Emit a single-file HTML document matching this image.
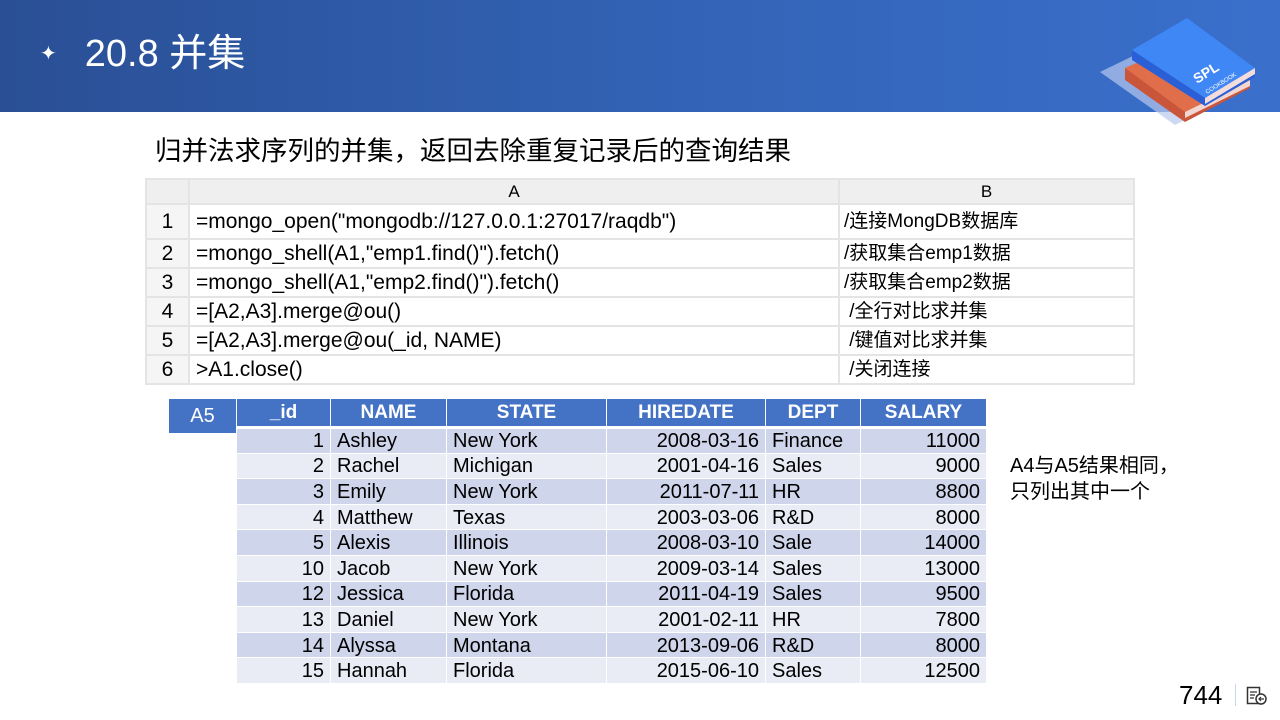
<!DOCTYPE html>
<html><head><meta charset="utf-8"><style>
*{margin:0;padding:0;box-sizing:border-box}
body{width:1280px;height:720px;position:relative;background:#fff;overflow:hidden;font-family:"Liberation Sans","Noto Sans CJK SC",sans-serif;color:#000}
.hdr{position:absolute;left:0;top:0;width:1280px;height:112px;background:linear-gradient(90deg,#2a4f95 0%,#3262b4 50%,#3a70cc 100%)}
.title{position:absolute;left:40px;top:29px;color:#fff;font-size:38px;line-height:50px}
.title .st{font-size:20px;position:relative;top:-6px;margin-right:28px}
.sub{position:absolute;left:155px;top:134px;font-size:26.5px;line-height:34px}
.ab{position:absolute}
table{border-collapse:collapse;position:absolute}
.code{left:145px;top:178px;width:988px;table-layout:fixed}
.code td{border:2px solid #e4e4e4;height:29px;font-size:21px;line-height:22px;padding:0 0 0 6px;white-space:nowrap;overflow:hidden}
.code tr.h td{background:#efefef;font-size:17px;text-align:center;height:25px;padding:0}
.code td.n{text-align:center;padding:0;background:#f5f5f5}
.code td.b{font-size:19px;padding-left:4px}
.data{left:236px;top:398px;width:751px}
.data th{background:#4472c4;color:#fff;font-size:19px;height:29px;border:1px solid #fff;border-bottom:3px solid #fff}
.data td{font-size:20px;height:25.6px;border:1px solid #fff;padding:1px 6px 0;line-height:22px}
.data tr:nth-child(even) td{background:#cfd5ea}
.data tr:nth-child(odd) td{background:#e9ebf5}
.r{text-align:right}
</style></head><body>
<div class="hdr"></div>
<div class="title"><span class="st">✦</span>20.8 并集</div>
<svg class="ab" style="left:1095px;top:10px" width="170" height="115" viewBox="0 0 170 115">
<polygon points="5,62 40,45 110,100 80,115" fill="#b8c8ee" opacity="0.7"/>
<polygon points="30,58 95,30 155,70 155,78 90,112 30,70" fill="#c9553a"/>
<polygon points="30,58 95,30 155,70 90,102" fill="#e06e4a"/>
<polygon points="90,102 155,70 155,76 90,108" fill="#f3d6d0"/>
<polygon points="37,40 92,8 160,58 160,67 110,96 37,50" fill="#2b5fd6"/>
<polygon points="37,40 92,8 160,58 110,88" fill="#3f87f5"/>
<polygon points="110,88 160,58 160,64 110,94" fill="#f2dcdc"/>
<text x="102" y="74" fill="#fff" font-size="14" font-weight="bold" transform="rotate(-32 102 74)" font-family="Liberation Sans">SPL</text>
<text x="112" y="84" fill="#fff" font-size="6" transform="rotate(-32 112 84)" font-family="Liberation Sans">COOKBOOK</text>
</svg>
<div class="sub">归并法求序列的并集，返回去除重复记录后的查询结果</div>
<table class="code">
<colgroup><col style="width:43px"><col style="width:650px"><col style="width:295px"></colgroup>
<tr class="h"><td class="n"></td><td>A</td><td class="b" style="text-align:center;padding:0;font-size:17px">B</td></tr>
<tr><td class="n" style="height:35px">1</td><td>=mongo_open("mongodb://127.0.0.1:27017/raqdb")</td><td class="b">/连接MongDB数据库</td></tr>
<tr><td class="n">2</td><td>=mongo_shell(A1,"emp1.find()").fetch()</td><td class="b">/获取集合emp1数据</td></tr>
<tr><td class="n">3</td><td>=mongo_shell(A1,"emp2.find()").fetch()</td><td class="b">/获取集合emp2数据</td></tr>
<tr><td class="n">4</td><td>=[A2,A3].merge@ou()</td><td class="b">&nbsp;/全行对比求并集</td></tr>
<tr><td class="n">5</td><td>=[A2,A3].merge@ou(_id, NAME)</td><td class="b">&nbsp;/键值对比求并集</td></tr>
<tr><td class="n">6</td><td>&gt;A1.close()</td><td class="b">&nbsp;/关闭连接</td></tr>
</table>
<div class="ab" style="left:169px;top:399px;width:67px;height:34px;background:#4472c4;color:#fff;font-size:20px;text-align:center;line-height:34px">A5</div>
<table class="data">
<tr><th style="width:94px">_id</th><th style="width:116px">NAME</th><th style="width:160px">STATE</th><th style="width:159px">HIREDATE</th><th style="width:95px">DEPT</th><th>SALARY</th></tr>
<tr><td class="r">1</td><td>Ashley</td><td>New York</td><td class="r">2008-03-16</td><td>Finance</td><td class="r">11000</td></tr>
<tr><td class="r">2</td><td>Rachel</td><td>Michigan</td><td class="r">2001-04-16</td><td>Sales</td><td class="r">9000</td></tr>
<tr><td class="r">3</td><td>Emily</td><td>New York</td><td class="r">2011-07-11</td><td>HR</td><td class="r">8800</td></tr>
<tr><td class="r">4</td><td>Matthew</td><td>Texas</td><td class="r">2003-03-06</td><td>R&amp;D</td><td class="r">8000</td></tr>
<tr><td class="r">5</td><td>Alexis</td><td>Illinois</td><td class="r">2008-03-10</td><td>Sale</td><td class="r">14000</td></tr>
<tr><td class="r">10</td><td>Jacob</td><td>New York</td><td class="r">2009-03-14</td><td>Sales</td><td class="r">13000</td></tr>
<tr><td class="r">12</td><td>Jessica</td><td>Florida</td><td class="r">2011-04-19</td><td>Sales</td><td class="r">9500</td></tr>
<tr><td class="r">13</td><td>Daniel</td><td>New York</td><td class="r">2001-02-11</td><td>HR</td><td class="r">7800</td></tr>
<tr><td class="r">14</td><td>Alyssa</td><td>Montana</td><td class="r">2013-09-06</td><td>R&amp;D</td><td class="r">8000</td></tr>
<tr><td class="r">15</td><td>Hannah</td><td>Florida</td><td class="r">2015-06-10</td><td>Sales</td><td class="r">12500</td></tr>
</table>
<div class="ab" style="left:1010px;top:453px;font-size:20px;line-height:26px">A4与A5结果相同，<br>只列出其中一个</div>
<div class="ab" style="left:1179px;top:680px;font-size:26px;line-height:30px">744</div>
<div class="ab" style="left:1235px;top:684px;width:1px;height:22px;background:#c8d4ea"></div>
<svg class="ab" style="left:1246px;top:686px" width="22" height="20" viewBox="0 0 22 20"><rect x="1.5" y="1.5" width="12" height="16" fill="none" stroke="#333" stroke-width="1.5"/><path d="M4 6h7M4 9h5M4 12h4" stroke="#333" stroke-width="1.2"/><circle cx="15" cy="13" r="5" fill="#fff" stroke="#333" stroke-width="1.5"/><path d="M18 13h-5M15 11l-2 2 2 2" stroke="#333" stroke-width="1.2" fill="none"/></svg>
</body></html>
